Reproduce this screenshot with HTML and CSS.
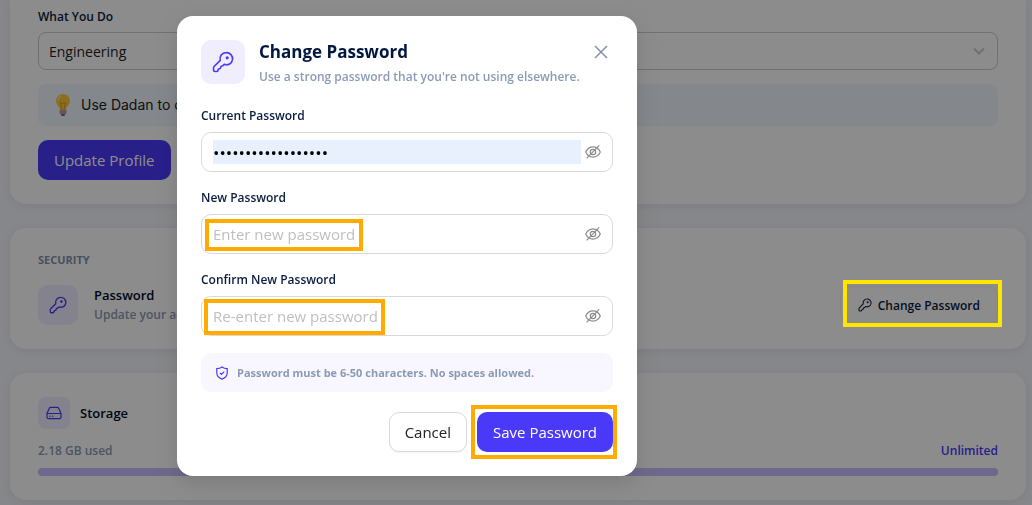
FILE: index.html
```html
<!DOCTYPE html>
<html lang="en">
<head>
  <meta charset="UTF-8" />
  <meta name="viewport" content="width=device-width, initial-scale=1.0"/>
  <title>Profile settings</title>
  <link rel="stylesheet" href="styles.css">
</head>
<body>
  <!-- Shared icons -->
  <svg class="sprite" aria-hidden="true">
    <symbol id="icon-key" viewBox="0 0 20 20">
      <path d="M12.800 1.500a5.500 5.500 0 0 0-5.300 7L1.900 14.100a1.600 1.600 0 0 0-.5 1.100v2c0 .8.600 1.400 1.400 1.400h1.400c.8 0 1.300-.6 1.300-1.300 0-.7.5-1.200 1.200-1.200s1.200-.5 1.200-1.200.5-1.300 1.200-1.300c.5 0 .8-.2 1.100-.5l1-1a5.500 5.500 0 1 0 1.600-10.600z"/>
      <circle cx="13.800" cy="6.200" r=".7"/>
    </symbol>
    <symbol id="icon-eye-off" viewBox="0 0 16 16">
      <path d="M.7 8C2.300 4.600 4.900 2.900 8 2.900s5.700 1.700 7.300 5.100c-1.600 3.400-4.200 5.100-7.300 5.100S2.300 11.400.7 8z"/>
      <circle cx="8" cy="8" r="2.700"/>
      <path d="M1.600 14.400 14.200 1.400"/>
    </symbol>
  </svg>

  <main class="page">
    <!-- Profile -->
    <section class="card card-profile">
      <label class="label" for="role">What You Do</label>
      <div class="select-wrap">
        <select class="select" id="role">
          <option>Engineering</option>
        </select>
        <svg class="chevron" viewBox="0 0 12 12"><path d="M1 3.500 6 8.500l5-5"/></svg>
      </div>
      <div class="tip">
        <svg class="bulb" viewBox="0 0 16 24">
          <path fill="#ffc83d" d="M8 1a7 7 0 0 0-7 7c0 4 3.500 5 4 9h6c.5-4 4-5 4-9a7 7 0 0 0-7-7z"/>
          <path fill="#ffe58a" d="M7 2.500a5 5 0 0 0-4.500 5c0 1 .5 1 1 0C4 5 5 4 7 3.500z"/>
          <path fill="none" stroke="#e19b1e" d="M7 17 5.500 9.500c1.500 1 3.500 1 5 0L9 17"/>
          <path fill="#b79bb5" d="M4.500 17h7v3.500l-1.500 1H6l-1.500-1z"/>
          <path fill="#77668a" d="M6 21h4l-.5 2h-3z"/>
        </svg>
        <span>Use Dadan to create</span>
      </div>
      <button class="btn btn-primary" type="button">Update Profile</button>
    </section>

    <!-- Security -->
    <section class="card">
      <h2 class="section-title">SECURITY</h2>
      <div class="row">
        <span class="icon-box icon-md"><svg class="icon"><use href="#icon-key"/></svg></span>
        <div class="row-text">
          <h3 class="item-title">Password</h3>
          <p class="muted">Update your account</p>
        </div>
        <button class="btn-outline" type="button">
          <svg class="icon"><use href="#icon-key"/></svg>Change Password
        </button>
      </div>
    </section>

    <!-- Storage -->
    <section class="card">
      <div class="storage-head">
        <span class="icon-box icon-sm">
          <svg class="icon" viewBox="0 0 16 16"><path d="M1 8.500 3.300 3.200A1.400 1.400 0 0 1 4.600 2.300h6.800a1.400 1.400 0 0 1 1.300.9L15 8.500v3.700a1.400 1.400 0 0 1-1.400 1.400H2.400A1.400 1.400 0 0 1 1 12.200zM1 8.500h14M3.800 11.200h.4M6.500 11.200h.4"/></svg>
        </span>
        <h3 class="item-title">Storage</h3>
      </div>
      <div class="usage">
        <span class="muted">2.18 GB used</span>
        <span class="limit">Unlimited</span>
      </div>
      <div class="bar"></div>
    </section>
  </main>

  <div class="overlay">
    <form class="modal" role="dialog" aria-labelledby="modal-title">
      <header class="modal-head">
        <span class="icon-box icon-lg"><svg class="icon"><use href="#icon-key"/></svg></span>
        <div class="modal-heading">
          <h1 class="modal-title" id="modal-title">Change Password</h1>
          <p class="modal-sub">Use a strong password that you're not using elsewhere.</p>
        </div>
        <button class="close" type="button" aria-label="Close">
          <svg viewBox="0 0 14 14"><path d="M1 1l12 12M13 1 1 13"/></svg>
        </button>
      </header>

      <div class="field">
        <label class="label" for="current">Current Password</label>
        <div class="input-wrap">
          <input class="input filled" id="current" type="password" value="abcdefghijklmnopqr">
          <button class="eye" type="button" aria-label="Show password"><svg><use href="#icon-eye-off"/></svg></button>
        </div>
      </div>
      <div class="field">
        <label class="label" for="new">New Password</label>
        <div class="input-wrap">
          <input class="input" id="new" type="password" placeholder="Enter new password">
          <button class="eye" type="button" aria-label="Show password"><svg><use href="#icon-eye-off"/></svg></button>
          <span class="mark mark-new"></span>
        </div>
      </div>
      <div class="field">
        <label class="label" for="confirm">Confirm New Password</label>
        <div class="input-wrap">
          <input class="input" id="confirm" type="password" placeholder="Re-enter new password">
          <button class="eye" type="button" aria-label="Show password"><svg><use href="#icon-eye-off"/></svg></button>
          <span class="mark mark-confirm"></span>
        </div>
      </div>

      <div class="note">
        <svg class="shield" viewBox="0 0 14 14"><path d="M7 1C5.500 2.200 3.700 2.700 1.800 2.700v4c0 3.200 2.200 5.300 5.200 6.400 3-1.100 5.200-3.200 5.200-6.400v-4C10.300 2.700 8.500 2.200 7 1zM5 7l1.500 1.500L9.200 5.700"/></svg>
        <span>Password must be 6-50 characters. No spaces allowed.</span>
      </div>

      <footer class="actions">
        <button class="btn btn-plain" type="button">Cancel</button>
        <div class="save">
          <button class="btn btn-primary" type="submit">Save Password</button>
          <span class="mark mark-save"></span>
        </div>
      </footer>
    </form>
    <span class="mark mark-change"></span>
  </div>
</body>
</html>
```
FILE: styles.css
```css
* {
  box-sizing: border-box;
}

body {
  margin: 0;
  background: #f5f6fb;
  color: #0a1c3f;
  font-family: 'Open Sans', 'Noto Sans', sans-serif;
  font-size: 12px;
  line-height: 20px;
  overflow: hidden;
}

h1, h2, h3, p {
  margin: 0;
}

button, input, select {
  font-family: inherit;
}

.sprite {
  position: absolute;
  width: 0;
  height: 0;
}

/* Page */
.page {
  display: flex;
  flex-direction: column;
  gap: 24px;
  padding: 0 6px 5px 10px;
}

.card {
  background: #fff;
  border-radius: 16px;
  padding: 24px 28px;
  box-shadow: 0 2px 10px rgba(20, 20, 60, 0.08);
}

.card-profile {
  display: flex;
  flex-direction: column;
  align-items: flex-start;
  padding-top: 7px;
  border-radius: 0 0 16px 16px;
}

.label {
  display: block;
  font-weight: 600;
  color: #0a1c3f;
}

.select-wrap {
  position: relative;
  width: 100%;
  margin: 5px 0 14px;
}

.select {
  display: block;
  appearance: none;
  width: 100%;
  height: 38px;
  padding: 0 10px;
  border: 1px solid #ccc;
  border-radius: 8px;
  background: #fff;
  color: #222;
  font-size: 14px;
}

.chevron {
  position: absolute;
  right: 13px;
  top: 13px;
  width: 12px;
  height: 12px;
  fill: none;
  stroke: #ccc;
  stroke-width: 2;
}

.tip {
  display: flex;
  align-items: center;
  gap: 10px;
  width: 100%;
  height: 42px;
  margin-bottom: 14px;
  padding: 0 17px;
  border-radius: 8px;
  background: #f0f7ff;
  color: #222;
  font-family: Inter, sans-serif;
  font-size: 14px;
}

.bulb {
  width: 16px;
  height: 24px;
}

/* Buttons */
.btn {
  height: 40px;
  padding: 0 15px;
  border: 1px solid transparent;
  border-radius: 10px;
  font-size: 15px;
}

.btn-primary {
  background: #4b39fa;
  color: #fff;
}

.btn-plain {
  background: #fff;
  border-color: #d9d9d9;
  color: #222;
  box-shadow: 0 2px 0 rgba(0, 0, 0, 0.02);
}

.btn-outline {
  display: flex;
  align-items: center;
  gap: 6px;
  height: 38px;
  padding: 0 17px;
  border: 1px solid #f5f5f7;
  border-radius: 10px;
  background: #fff;
  color: #0a1c3f;
  font-size: 12px;
  font-weight: 600;
}

.btn-outline .icon {
  width: 14px;
  height: 14px;
}

/* Icons */
.icon {
  fill: none;
  stroke: currentColor;
  stroke-width: 1.5;
  stroke-linecap: round;
  stroke-linejoin: round;
}

.icon-box {
  display: flex;
  flex-shrink: 0;
  align-items: center;
  justify-content: center;
  background: #f0edff;
  color: #4b39fa;
}

.icon-lg {
  width: 44px;
  height: 44px;
  margin-right: 14px;
  border-radius: 10px;
}

.icon-lg .icon {
  width: 22px;
  height: 22px;
}

.icon-md {
  width: 40px;
  height: 40px;
  border-radius: 10px;
}

.icon-md .icon {
  width: 18px;
  height: 18px;
}

.icon-sm {
  width: 32px;
  height: 32px;
  border-radius: 8px;
}

.icon-sm .icon {
  width: 16px;
  height: 16px;
  stroke-width: 1.2;
}

/* Security and storage */
.section-title {
  margin-bottom: 17px;
  color: #8392ab;
  font-size: 11px;
  line-height: 16px;
  font-weight: 700;
}

.row {
  display: flex;
  align-items: center;
  gap: 16px;
}

.row-text {
  flex: 1;
}

.item-title {
  font-size: 13px;
  font-weight: 600;
  color: #000b29;
}

.muted {
  color: #8c9bb5;
  font-weight: 600;
}

.storage-head {
  display: flex;
  align-items: center;
  gap: 10px;
  margin-bottom: 12px;
}

.usage {
  display: flex;
  justify-content: space-between;
  margin-bottom: 7px;
}

.limit {
  color: #4b39fa;
  font-weight: 600;
}

.bar {
  height: 8px;
  border-radius: 4px;
  background: #c9bfff;
}

/* Modal */
.overlay {
  position: fixed;
  inset: 0;
  padding: 16px 16px 16px 177px;
  background: rgba(0, 0, 0, 0.45);
}

.modal {
  max-width: 460px;
  padding: 24px;
  border-radius: 16px;
  background: #fff;
  box-shadow: 0 6px 16px rgba(0, 0, 0, 0.08), 0 9px 28px 8px rgba(0, 0, 0, 0.05);
}

.modal-head {
  display: flex;
  align-items: flex-start;
  height: 44px;
  margin-bottom: 22px;
}

.modal-heading {
  flex: 1;
  min-width: 0;
  white-space: nowrap;
}

.modal-title {
  color: #001740;
  font-size: 17px;
  line-height: 24px;
  font-weight: 700;
}

.modal-sub {
  margin-top: 2px;
  color: #8c9bb5;
  font-weight: 600;
  line-height: 22px;
}

.close {
  width: 24px;
  height: 24px;
  padding: 5px;
  border: 0;
  background: none;
}

.close svg {
  display: block;
  width: 14px;
  height: 14px;
  fill: none;
  stroke: #8392ab;
  stroke-width: 1.5;
}

.field {
  display: flex;
  flex-direction: column;
  gap: 6px;
  margin-bottom: 16px;
}

.input-wrap {
  position: relative;
  display: flex;
  align-items: center;
  gap: 4px;
  height: 40px;
  padding: 0 11px;
  border: 1px solid #d9d9d9;
  border-radius: 10px;
}

.input {
  flex: 1;
  min-width: 0;
  height: 24px;
  padding: 0;
  border: 0;
  outline: 0;
  background: none;
  color: #000;
  font-size: 15px;
}

.input::placeholder {
  color: #bfbfbf;
}

.input.filled {
  background: #e8f0fe;
  font-size: 17px;
}

.eye {
  width: 16px;
  height: 16px;
  padding: 0;
  border: 0;
  background: none;
}

.eye svg {
  display: block;
  width: 16px;
  height: 16px;
  fill: none;
  stroke: #8c8c8c;
  stroke-width: 1.2;
}

.note {
  display: flex;
  align-items: center;
  gap: 8px;
  height: 39px;
  margin: 17px 0 20px;
  padding: 0 14px;
  border-radius: 10px;
  background: #f8f6ff;
  color: #8c9bb5;
  font-size: 11px;
  font-weight: 700;
}

.shield {
  width: 14px;
  height: 14px;
  fill: none;
  stroke: #4b39fa;
  stroke-width: 1.2;
}

.actions {
  display: flex;
  justify-content: flex-end;
  gap: 10px;
}

.save {
  position: relative;
}

/* Highlight frames over the controls */
.mark {
  position: absolute;
  border: 4px solid #ffab00;
  pointer-events: none;
}

.mark-new {
  left: 3px;
  top: 4px;
  width: 158px;
  height: 32px;
}

.mark-confirm {
  left: 2px;
  top: 2px;
  width: 181px;
  height: 36px;
}

.mark-save {
  inset: -7px -4px -7px -6px;
}

.mark-change {
  right: 30px;
  top: 280px;
  width: 159px;
  height: 47px;
  border-color: #ffe600;
}
```
